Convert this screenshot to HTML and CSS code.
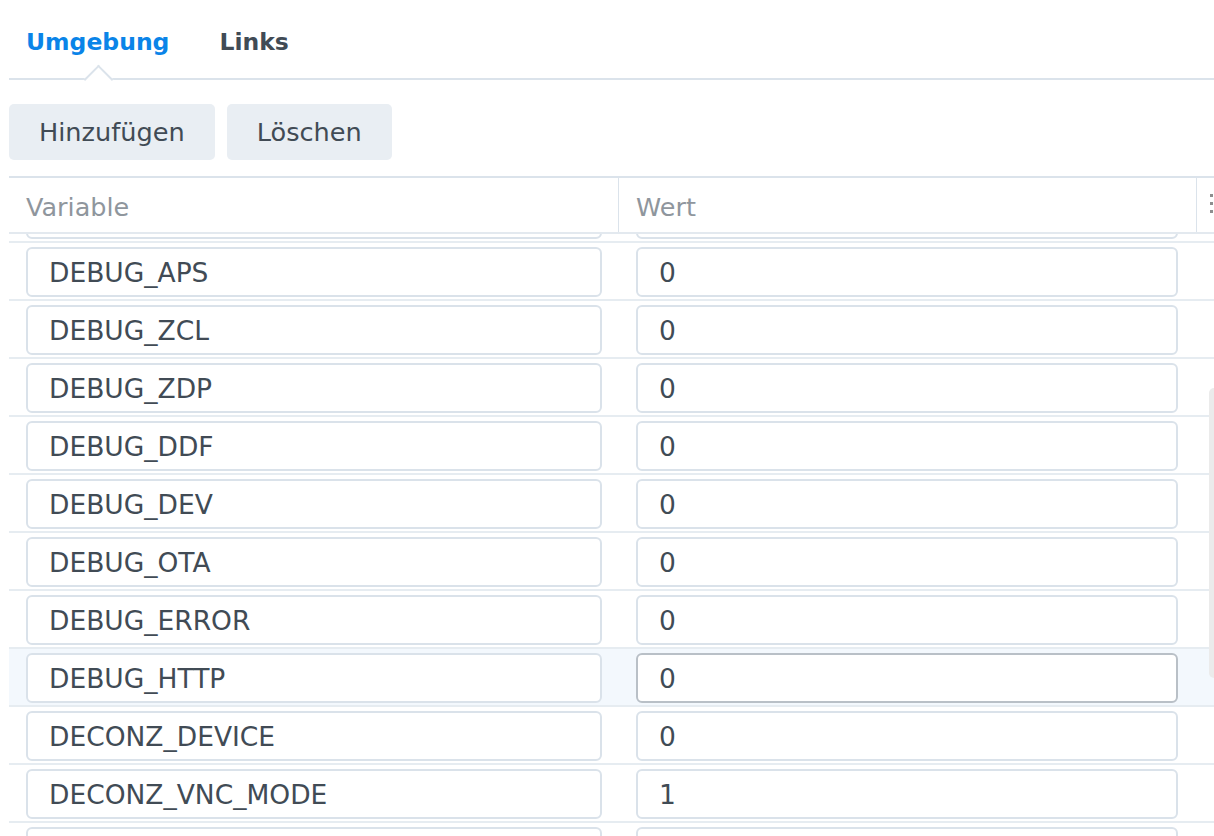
FILE: index.html
```html
<!DOCTYPE html>
<html lang="de">
<head>
  <meta charset="UTF-8">
  <meta name="viewport" content="width=device-width, initial-scale=1.0">
  <title>Umgebung</title>
  <link rel="stylesheet" href="styles.css">
</head>
<body>
<div class="panel">
  <!-- Tabs -->
  <div class="tabs">
    <div class="tab active">Umgebung</div>
    <div class="tab">Links</div>
  </div>

  <!-- Toolbar -->
  <div class="toolbar">
    <button type="button" class="btn">Hinzufügen</button>
    <button type="button" class="btn">Löschen</button>
  </div>

  <!-- Grid -->
  <div class="grid">
    <div class="grid-head">
      <div class="head-cell">Variable</div>
      <div class="head-cell">Wert</div>
      <div class="head-cell head-menu">
        <svg width="4" height="20" viewBox="0 0 4 20"><rect x="0" y="0" width="3" height="3"/><rect x="0" y="8" width="3" height="3"/><rect x="0" y="16" width="3" height="3"/></svg>
      </div>
    </div>
    <div class="grid-body">
      <div class="rows">
        <!-- scrolled past, only the bottom edge shows -->
        <div class="row"><div class="cell"><div class="field"></div></div><div class="cell"><div class="field"></div></div></div>
        <div class="row"><div class="cell"><div class="field">DEBUG_APS</div></div><div class="cell"><div class="field">0</div></div></div>
        <div class="row"><div class="cell"><div class="field">DEBUG_ZCL</div></div><div class="cell"><div class="field">0</div></div></div>
        <div class="row"><div class="cell"><div class="field">DEBUG_ZDP</div></div><div class="cell"><div class="field">0</div></div></div>
        <div class="row"><div class="cell"><div class="field">DEBUG_DDF</div></div><div class="cell"><div class="field">0</div></div></div>
        <div class="row"><div class="cell"><div class="field">DEBUG_DEV</div></div><div class="cell"><div class="field">0</div></div></div>
        <div class="row"><div class="cell"><div class="field">DEBUG_OTA</div></div><div class="cell"><div class="field">0</div></div></div>
        <div class="row"><div class="cell"><div class="field">DEBUG_ERROR</div></div><div class="cell"><div class="field">0</div></div></div>
        <div class="row hover"><div class="cell"><div class="field">DEBUG_HTTP</div></div><div class="cell"><div class="field focus">0</div></div></div>
        <div class="row"><div class="cell"><div class="field">DECONZ_DEVICE</div></div><div class="cell"><div class="field">0</div></div></div>
        <div class="row"><div class="cell"><div class="field">DECONZ_VNC_MODE</div></div><div class="cell"><div class="field">1</div></div></div>
        <div class="row"><div class="cell"><div class="field"></div></div><div class="cell"><div class="field"></div></div></div>
      </div>
    </div>
  </div>

  <div class="scroll-thumb"></div>
</div>
</body>
</html>
```

FILE: styles.css
```css
html, body {
  margin: 0;
  overflow: hidden;
}
body {
  font-family: "DejaVu Sans", Verdana, sans-serif;
  color: #414b55;
  background: #fff;
}
.panel {
  position: relative;
  height: 836px;
  padding-left: 9px;
  overflow: hidden;
}

/* Tabs */
.tabs {
  display: flex;
  gap: 16px;
  padding-top: 28px;
  border-bottom: 2px solid #dbe3eb;
}
.tab {
  position: relative;
  padding: 0 17px 22px;
  font-size: 23.5px;
  font-weight: bold;
  line-height: 28px;
  color: #414b55;
}
.tab.active {
  color: #0a84e8;
}
.tab.active::after {
  content: "";
  position: absolute;
  left: 50%;
  bottom: -12px;
  width: 19px;
  height: 19px;
  margin-left: -10px;
  background: #fff;
  border-top: 2px solid #dbe3eb;
  border-left: 2px solid #dbe3eb;
  transform: rotate(45deg);
}

/* Toolbar */
.toolbar {
  display: flex;
  gap: 12px;
  padding: 24px 0 16px;
}
.btn {
  height: 56px;
  padding: 0 30px;
  border: none;
  border-radius: 5px;
  background: #e9eef3;
  color: #414b55;
  font-family: inherit;
  font-size: 25.6px;
}

/* Grid */
.grid {
  border-top: 2px solid #dbe3eb;
  width: 1240px;
}
.grid-head, .row {
  display: grid;
  grid-template-columns: 610px 578px 1fr;
}
.grid-head {
  height: 54px;
  border-bottom: 2px solid #e3e9ef;
}
.head-cell {
  display: flex;
  align-items: center;
  padding: 3px 17px 0;
  font-size: 25.5px;
  color: #8f969d;
  border-right: 1px solid #dbe3eb;
}
.head-menu {
  padding: 0 0 0 13px;
  border-right: none;
}
.head-menu svg {
  fill: #8e8e8e;
  margin-top: -2px;
}
.grid-body {
  height: 602px;
  overflow: hidden;
}
.rows {
  margin-top: -49px;
}
.row {
  padding: 4px 0 2px;
  border-bottom: 2px solid #e6ecf1;
}
.row.hover {
  background: #f3f8fd;
}
.cell {
  padding-left: 17px;
}
.field {
  display: flex;
  align-items: center;
  box-sizing: border-box;
  height: 50px;
  padding: 1px 22px 0 21px;
  border: 2px solid #dae2ea;
  border-radius: 6px;
  background: #fff;
  font-size: 26.5px;
  color: #414b55;
}
.cell:first-child .field {
  width: 576px;
}
.cell:nth-child(2) .field {
  width: 542px;
}
.field.focus {
  border-color: #b9c0c7;
}

/* overlay scrollbar */
.scroll-thumb {
  position: absolute;
  top: 388px;
  right: -5px;
  width: 10px;
  height: 290px;
  border-radius: 5px;
  background: #ebebeb;
}
```
